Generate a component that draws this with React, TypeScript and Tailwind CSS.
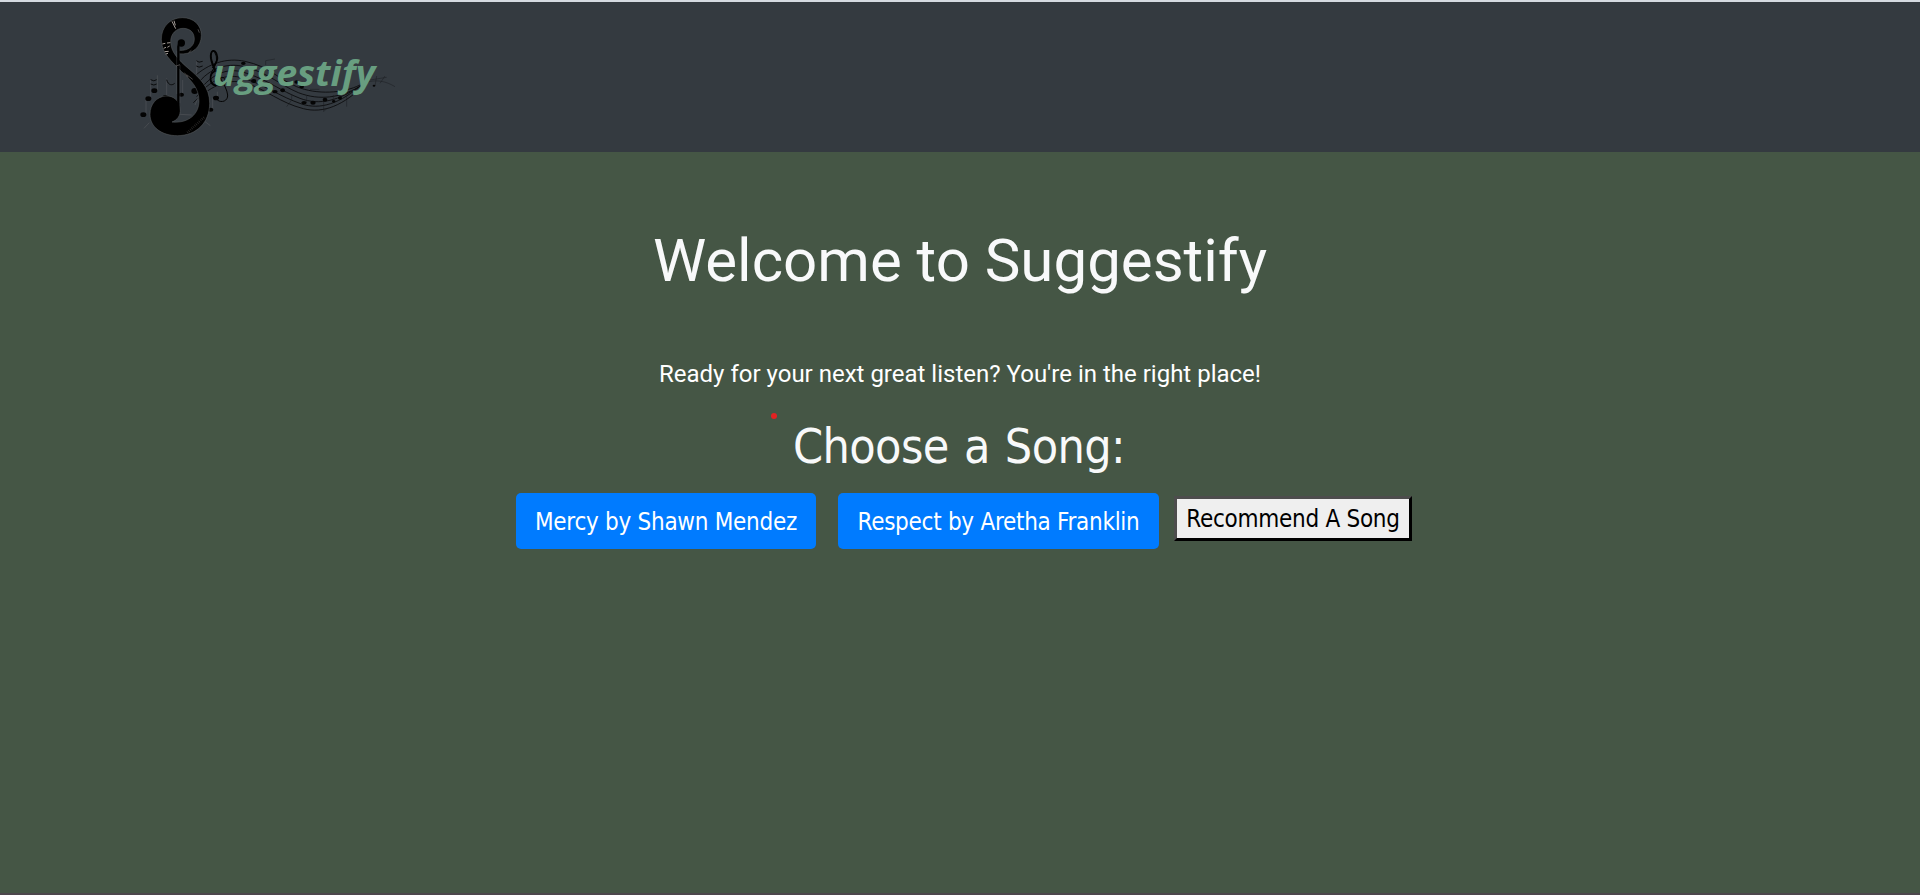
function Logo() {
  return (
    <svg width="270" height="148" viewBox="0 6 810 444" fill="none" aria-label="Suggestify">
      {/* staff lines */}
      <g stroke="#08090a" strokeWidth="2.5">
        <path d="M190 232C235 190 290 172 345 184C420 200 440 235 500 260C560 285 640 280 690 255" />
        <path d="M200 255C240 200 300 186 350 202C420 222 450 255 505 278C570 303 630 292 685 262" />
        <path d="M205 275C250 215 300 201 350 220C420 243 450 272 510 295C570 318 630 300 690 258" />
        <path d="M200 290C250 230 300 218 350 238C410 258 450 290 515 312C570 330 630 312 700 250" />
        <path d="M190 308C250 250 300 235 350 250C410 270 450 308 520 326C580 341 640 318 710 248" />
      </g>
      <g stroke="#1b1d20" strokeWidth="1.5">
        <path d="M700 250C740 235 770 245 795 260M720 240L770 232M735 258L740 228M750 250L765 228" />
        <path d="M470 320L485 300V282M407 195V182L435 177M581 335V302M592 324L582 334M610 305V285M650 320V275M530 308V285M540 268H568" />
      </g>
      {/* treble clef behind the wordmark */}
      <path
        d="M262 300C275 310 294 303 293 285C290 255 254 215 246 182C238 150 252 143 259 170C264 200 237 212 242 240C250 264 284 262 285 242C284 225 262 232 265 248"
        stroke="#050505"
        strokeWidth="3"
      />
      <path d="M248 204C252 195 264 185 262 172C259 148 244 146 242 167C241 183 251 202 255 213C236 222 237 254 258 257" stroke="#020202" strokeWidth="5" />
      <g fill="#050505">
        <ellipse cx="340" cy="190" rx="7" ry="5" />
        <ellipse cx="371" cy="243" rx="8" ry="6" />
        <ellipse cx="435" cy="275" rx="8" ry="5" />
        <ellipse cx="458" cy="271" rx="7" ry="6" />
        <ellipse cx="500" cy="246" rx="7" ry="5" />
        <ellipse cx="515" cy="260" rx="7" ry="5" />
        <ellipse cx="522" cy="308" rx="8" ry="5" />
        <ellipse cx="549" cy="308" rx="8" ry="6" />
        <ellipse cx="585" cy="299" rx="7" ry="6" />
        <ellipse cx="611" cy="304" rx="5" ry="4" />
        <ellipse cx="630" cy="294" rx="6" ry="5" />
        <ellipse cx="732" cy="257" rx="4" ry="3" />
      </g>
      {/* loose notes */}
      <g stroke="#5a5d61" strokeWidth="1.5">
        <path d="M48 343V290M62 295V240M82 272V226M110 290V235M200 270V180M248 330V295M158 284V240M262 295V275" />
        <path d="M42 385L58 368M225 365L241 377M150 343L185 345M195 315L208 285" />
      </g>
      <g stroke="#0b0c0d" strokeWidth="3">
        <path d="M62 239Q72 246 80 239M62 252Q72 258 80 252M110 239C115 258 128 256 134 250M199 182Q206 190 218 184M199 198Q206 205 218 198" />
      </g>
      <g fill="#030303">
        <ellipse cx="40" cy="344" rx="9" ry="7" />
        <ellipse cx="55" cy="296" rx="9" ry="7" />
        <ellipse cx="73" cy="272" rx="9" ry="7" />
        <ellipse cx="106" cy="291" rx="8" ry="6" />
        <ellipse cx="154" cy="284" rx="8" ry="6" />
        <ellipse cx="194" cy="273" rx="10" ry="9" />
        <ellipse cx="242" cy="329" rx="8" ry="6" />
        <ellipse cx="258" cy="294" rx="9" ry="7" />
      </g>
      {/* big S */}
      <path
        d="M147 161C185 166 214 142 214 106C214 74 190 53 157 53C119 53 94 82 94 118C94 160 125 184 155 215C185 242 207 265 207 303C207 340 178 371 126 366C143 360 152 345 150 330C150 302 130 287 108 288C80 290 60 312 60 343C60 382 96 407 142 407C200 407 239 367 239 310C239 262 210 235 177 207C145 180 122 155 122 125C122 101 139 84 161 85C181 86 193 98 193 117C193 139 174 153 147 151Z"
        fill="#000"
        stroke="#5b5e60"
        strokeWidth="1.5"
      />
      <path d="M145 335V140Q147 126 156 128" stroke="#000" strokeWidth="7" />
      <path d="M140 282V152M150 310V195" stroke="#5b5e60" strokeWidth="1" />
      <circle cx="154" cy="129" r="11" fill="#000" />
      <g stroke="#a39c97" strokeWidth="3">
        <path d="M126 64L137 86M132 62L136 76M97 132L106 130M111 129L121 128M101 145L108 142M112 142L119 138M104 155L116 154M107 162L114 160" />
      </g>
      <g stroke="#696766" strokeWidth="2">
        <path d="M138 198L150 194M170 224L188 238M163 218L174 232M176 158L184 151M204 88L208 98" />
        <path d="M172 398L222 352" strokeWidth="7" strokeDasharray="2 4" stroke="#2e2c2b" />
      </g>
      <text
        x="248"
        y="257"
        textLength="488"
        lengthAdjust="spacingAndGlyphs"
        className="fill-[#689e80] font-['Open_Sans',sans-serif] text-[108px] font-bold italic"
      >
        uggestify
      </text>
    </svg>
  );
}

interface SongButtonProps {
  label: string;
  className: string;
}

function SongButton({ label, className }: SongButtonProps) {
  return (
    <button
      className={`h-14 rounded-[5px] bg-[#007bff] pt-px whitespace-nowrap text-white ${className}`}
    >
      {label}
    </button>
  );
}

export default function App() {
  return (
    <div className="flex h-[895px] flex-col border-t-2 border-b-2 border-t-[#d5dae1] border-b-[#4d474c] bg-[#455645] font-['DejaVu_Sans_Condensed','DejaVu_Sans',sans-serif] text-2xl text-[#f8f9fa]">
      <header className="h-[150px] bg-[#343a40] pl-[130px]">
        <Logo />
      </header>
      <main className="flex flex-col items-center">
        <h1 className="mt-[73px] font-[Roboto,sans-serif] text-[60px] leading-[72px]">
          Welcome to Suggestify
        </h1>
        <p className="mt-[59px] font-[Roboto,sans-serif] text-2xl leading-9 text-white">
          Ready for your next great listen? You're in the right place!
        </p>
        <div className="relative mt-[25px]">
          <span className="absolute -top-[4px] -left-[22px] size-1.5 rounded-full bg-[#e32222]" />
          <h2 className="mr-[2px] text-[48px] leading-[58px] tracking-[-0.6px] [word-spacing:2px]">
            Choose a Song:
          </h2>
        </div>
        <div className="mt-[18px] ml-[8px] flex items-start gap-[22px] tracking-[-0.28px]">
          <SongButton label="Mercy by Shawn Mendez" className="w-[300px]" />
          <SongButton label="Respect by Aretha Franklin" className="w-[321px]" />
          <button className="mt-[3px] -ml-[7px] h-[45px] w-[238px] border-3 border-t-[#4d4d4d] border-r-black border-b-black border-l-[#4d4d4d] bg-[#efefef] pt-px whitespace-nowrap text-black">
            Recommend A Song
          </button>
        </div>
      </main>
    </div>
  );
}
